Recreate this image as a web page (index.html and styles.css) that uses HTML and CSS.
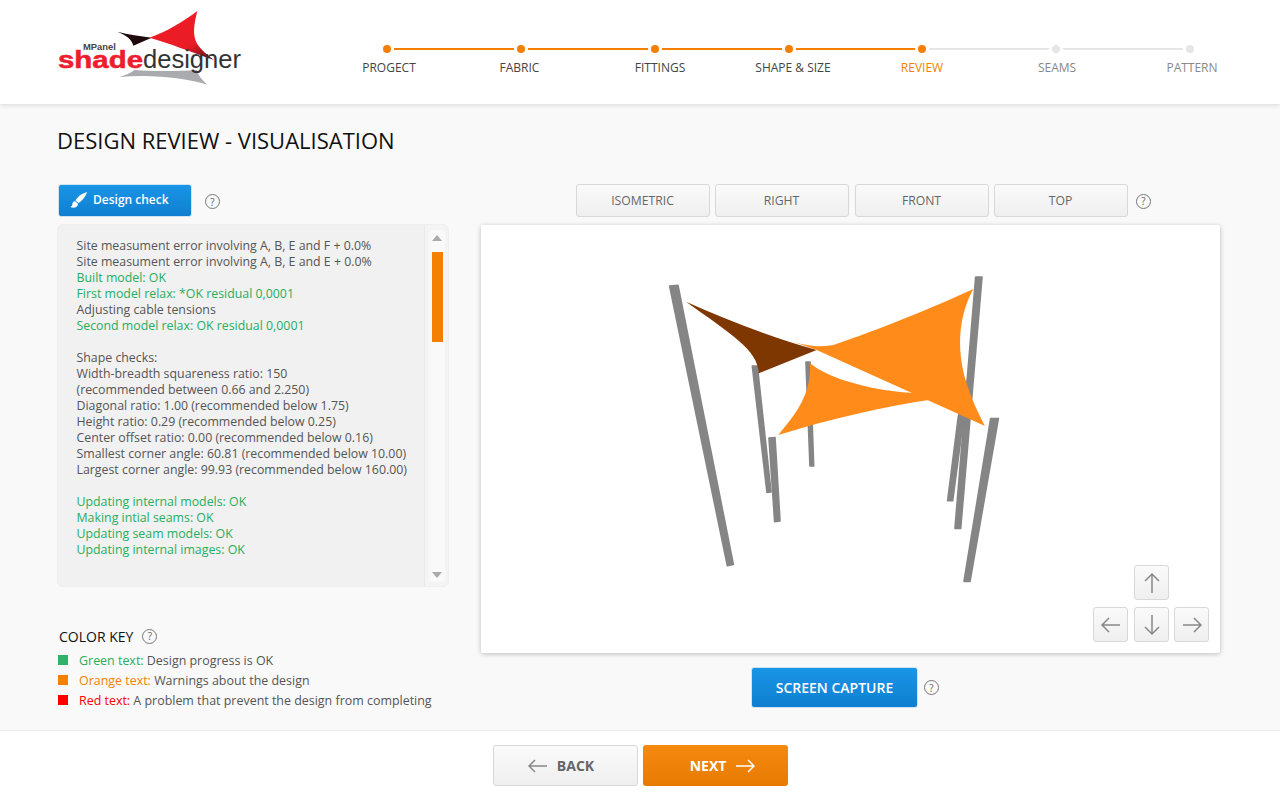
FILE: index.html
```html
<!DOCTYPE html>
<html lang="en">
<head>
<meta charset="utf-8">
<title>Design Review</title>
<link rel="stylesheet" href="styles.css">
</head>
<body>
<div class="page">
  <header class="header">
    <svg class="logo" viewBox="0 0 220 100" width="220" height="100">
      <defs>
        <linearGradient id="redg" x1="0.3" y1="0.2" x2="0.8" y2="1">
          <stop offset="0" stop-color="#ee1c25"/><stop offset="0.65" stop-color="#e81c25"/><stop offset="1" stop-color="#7a1015"/>
        </linearGradient>
      </defs>
      <g transform="scale(0.3333)">
        <path class="logo-dark" d="M232 95 C265 104 300 108 335 113 L280 137 C275 115 255 105 232 95Z"/>
        <path fill="url(#redg)" d="M472 33 C450 120 465 135 522 180 C450 155 390 130 328 113 C380 95 430 65 472 33Z"/>
        <path class="logo-grey" d="M238 231 C265 222 275 218 282 210 C340 214 410 214 470 210 C475 225 485 240 502 254 C440 235 340 222 238 231Z"/>
      </g>
      <text class="logo-mp" x="43" y="50">MPanel</text>
      <text class="logo-shade" x="18" y="68" textLength="85" lengthAdjust="spacingAndGlyphs">shade</text>
      <text class="logo-des" x="103" y="68" textLength="98" lengthAdjust="spacingAndGlyphs">designer</text>
    </svg>
    <nav class="stepper">
      <div class="step step-first"><div class="track"><i class="line line-hidden"></i><b class="dot"></b><i class="line"></i></div><span class="label nudge-r4">PROGECT</span></div>
      <div class="step"><div class="track"><i class="line"></i><b class="dot"></b><i class="line"></i></div><span class="label nudge-l3">FABRIC</span></div>
      <div class="step"><div class="track"><i class="line"></i><b class="dot"></b><i class="line"></i></div><span class="label nudge-r10">FITTINGS</span></div>
      <div class="step"><div class="track"><i class="line"></i><b class="dot"></b><i class="line"></i></div><span class="label nudge-r8">SHAPE &amp; SIZE</span></div>
      <div class="step step-current"><div class="track"><i class="line"></i><b class="dot"></b><i class="line line-off"></i></div><span class="label">REVIEW</span></div>
      <div class="step step-todo"><div class="track"><i class="line line-off"></i><b class="dot"></b><i class="line line-off"></i></div><span class="label nudge-r2">SEAMS</span></div>
      <div class="step step-todo"><div class="track"><i class="line line-off"></i><b class="dot"></b><i class="line line-hidden"></i></div><span class="label nudge-r4">PATTERN</span></div>
    </nav>
  </header>

  <h1 class="title">DESIGN REVIEW - VISUALISATION</h1>

  <main class="main">
    <section class="left">
      <div class="check-row">
        <button class="btn-blue btn-check">
          <svg width="18" height="18" viewBox="0 0 18 18"><path fill="#fff" d="M17 1 C12 2.5 7.5 5.5 5.5 9.5 L8.5 12 C12.5 9.5 16 5 17 1Z"/><path fill="#fff" d="M4.8 10 C2.5 10.5 2.5 12.5 2.2 14 C2 15 1 15.5 0.5 15.8 C2 17.2 6 17.2 7.6 14.5 C8 13.6 8 13 7.8 12.6Z"/></svg>
          Design check
        </button>
        <span class="help">?</span>
      </div>
      <div class="log">
        <div class="log-text">
          <p>Site measument error involving A, B, E and F + 0.0%</p>
          <p>Site measument error involving A, B, E and E + 0.0%</p>
          <p class="ok">Built model: OK</p>
          <p class="ok">First model relax: *OK residual 0,0001</p>
          <p>Adjusting cable tensions</p>
          <p class="ok">Second model relax: OK residual 0,0001</p>
          <p class="gap">Shape checks:</p>
          <p>Width-breadth squareness ratio: 150</p>
          <p>(recommended between 0.66 and 2.250)</p>
          <p>Diagonal ratio: 1.00 (recommended below 1.75)</p>
          <p>Height ratio: 0.29 (recommended below 0.25)</p>
          <p>Center offset ratio: 0.00 (recommended below 0.16)</p>
          <p>Smallest corner angle: 60.81 (recommended below 10.00)</p>
          <p>Largest corner angle: 99.93 (recommended below 160.00)</p>
          <p class="ok gap">Updating internal models: OK</p>
          <p class="ok">Making intial seams: OK</p>
          <p class="ok">Updating seam models: OK</p>
          <p class="ok">Updating internal images: OK</p>
        </div>
        <div class="scroll-col">
          <div class="scroll">
            <span class="tri tri-up"></span>
            <span class="thumb"></span>
            <span class="tri tri-down"></span>
          </div>
        </div>
      </div>
      <div class="key">
        <div class="key-title">COLOR KEY <span class="help">?</span></div>
        <div class="key-row"><span class="sq sq-green"></span><span><em class="t-green">Green text:</em> Design progress is OK</span></div>
        <div class="key-row"><span class="sq sq-orange"></span><span><em class="t-orange">Orange text:</em> Warnings about the design</span></div>
        <div class="key-row"><span class="sq sq-red"></span><span><em class="t-red">Red text:</em> A problem that prevent the design from completing</span></div>
      </div>
    </section>

    <section class="right">
      <div class="views">
        <button class="btn-grey view">ISOMETRIC</button>
        <button class="btn-grey view">RIGHT</button>
        <button class="btn-grey view view-shift">FRONT</button>
        <button class="btn-grey view">TOP</button>
        <span class="help">?</span>
      </div>
      <div class="canvas">
        <svg class="scene" viewBox="0 0 739 428" width="739" height="428">
          <g transform="translate(169 45) scale(0.33333)">
            <g class="pole">
              <path d="M468 276 L480 276 L491 588 L480 588Z"/>
              <path d="M307 288 L322 288 L363 666 L351 667Z"/>
              <path d="M925 440 L960 300 L908 692 L893 692Z"/>
              <path d="M59 48 L84 46 L250 883 L232 887Z"/>
              <path d="M357 504 L375 503 L390 753 L374 755Z"/>
              <path d="M977 21 L996 21 L932 775 L915 775Z"/>
              <path d="M1022 446 L1045 446 L960 934 L942 934Z"/>
            </g>
            <path class="sail-dark" d="M108 95 C230 150 360 200 500 240 L326 310 C325 240 240 190 108 95Z"/>
            <path class="sail" d="M430 215 C470 228 515 232 550 225 C640 195 800 135 970 57 C930 130 915 230 950 340 C965 390 985 430 1005 468 L500 240 Z"/>
            <path class="sail" d="M480 280 C540 330 680 365 805 370 L850 388 C700 410 530 450 385 495 C440 430 485 370 480 280Z"/>
          </g>
        </svg>
        <div class="pad">
          <button class="btn-grey arrow arrow-up"><svg width="18" height="22" viewBox="0 0 18 22"><path d="M9 21 V2 M2 9 L9 2 L16 9"/></svg></button>
          <button class="btn-grey arrow arrow-low"><svg width="20" height="16" viewBox="0 0 20 16"><path d="M19 8 H1 M8 1 L1 8 L8 15"/></svg></button>
          <button class="btn-grey arrow arrow-low"><svg width="18" height="22" viewBox="0 0 18 22"><path d="M9 1 V20 M2 13 L9 20 L16 13"/></svg></button>
          <button class="btn-grey arrow arrow-low"><svg width="20" height="16" viewBox="0 0 20 16"><path d="M1 8 H19 M12 1 L19 8 L12 15"/></svg></button>
        </div>
      </div>
      <div class="capture-row">
        <button class="btn-blue btn-capture">SCREEN CAPTURE</button>
        <span class="help">?</span>
      </div>
    </section>
  </main>

  <footer class="footer">
    <button class="btn-grey nav nav-back"><svg width="20" height="14" viewBox="0 0 20 14"><path d="M19 7 H1 M7 1 L1 7 L7 13"/></svg>BACK</button>
    <button class="nav nav-next">NEXT<svg width="20" height="14" viewBox="0 0 20 14"><path d="M1 7 H19 M13 1 L19 7 L13 13"/></svg></button>
  </footer>
</div>
</body>
</html>
```

FILE: styles.css
```css
* { box-sizing: border-box; }
html, body { margin: 0; padding: 0; }
body { font-family: "Open Sans", "Liberation Sans", sans-serif; background: #f9f9f9; color: #555; }
button { font-family: inherit; cursor: pointer; padding: 0; }
p { margin: 0; }
em { font-style: normal; }

.page { width: 1280px; height: 800px; display: flex; flex-direction: column; overflow: hidden; }

/* header */
.header { height: 104px; flex: none; background: #fff; padding-left: 40px; display: flex; box-shadow: 0 1px 5px rgba(0,0,0,.14); position: relative; }
.logo { display: block; flex: none; }
.logo-dark { fill: #1e0a0c; }
.logo-grey { fill: #a9abae; }
.logo-mp { font: bold 9.4px "Liberation Sans", sans-serif; fill: #444; }
.logo-shade { font: bold 23px "Liberation Sans", sans-serif; fill: #ed1c2e; stroke: #ed1c2e; stroke-width: .5px; }
.logo-des { font: 25px "Liberation Sans", sans-serif; fill: #333; }

.stepper { margin-left: 60px; padding-top: 45px; display: flex; }
.step { width: 134px; display: flex; flex-direction: column; color: #444; }
.track { display: flex; align-items: center; gap: 3px; height: 8px; }
.dot { width: 8px; height: 8px; border-radius: 50%; background: #f57f00; flex: none; }
.line { flex: 1; height: 2px; background: #f57f00; }
.line-off { background: #e6e6e6; }
.line-hidden { visibility: hidden; }
.label { font-size: 12px; line-height: 16px; margin-top: 7px; text-align: center; white-space: nowrap; }
.nudge-r2 { padding-left: 2px; }
.nudge-r4 { padding-left: 4px; }
.nudge-r8 { padding-left: 8px; }
.nudge-r10 { padding-left: 10px; }
.nudge-l3 { padding-right: 3px; }
.step-current { margin-left: -1px; }
.step-current .label { color: #f57f00; }
.step-todo { color: #888; }
.step-todo .dot { background: #e6e6e6; }

.title { margin: 21px 0 0 57px; font-size: 22px; line-height: 30px; font-weight: 400; color: #111; flex: none; }

/* main */
.main { flex: 1; display: flex; padding: 29px 0 0 57px; min-height: 0; }
.left { width: 392px; flex: none; }
.right { width: 739px; flex: none; margin-left: 32px; }

.help { display: inline-flex; align-items: center; justify-content: center; width: 15px; height: 15px; border: 1.3px solid #777; border-radius: 50%; font-size: 10px; line-height: 1; color: #666; background: transparent; flex: none; }

.btn-blue { background: linear-gradient(#1a95e6, #0f7fd0); border: 1px solid #cfe3f2; border-radius: 3px; color: #fff; }
.btn-grey { background: linear-gradient(#fafafa, #efefef); border: 1px solid #d8d8d8; border-radius: 3px; color: #666; }

.check-row { display: flex; align-items: center; gap: 13px; height: 33px; padding-left: 1px; }
.btn-check { width: 134px; height: 33px; display: flex; align-items: center; gap: 5px; padding: 0 0 2px 11px; font-size: 12px; font-weight: 600; }
.check-row .help { margin-top: 2px; }

.log { margin-top: 7px; height: 363px; background: #f1f1f1; border: 1px solid #efefef; border-radius: 6px; display: flex; }
.log-text { width: 367px; padding: 13px 0 0 18.5px; border-right: 1px solid #e9e9e9; font-size: 12.35px; line-height: 16px; color: #555; white-space: nowrap; }
.ok { color: #27ae60; }
.gap { margin-top: 16px; }
.scroll-col { flex: 1; background: #f4f4f4; border-radius: 0 6px 6px 0; padding: 5px 3px 4px 4px; }
.scroll { height: 100%; background: #f9f9f9; border-radius: 4px; display: flex; flex-direction: column; align-items: center; padding-top: 5px; }
.tri { width: 0; height: 0; border-left: 5px solid transparent; border-right: 5px solid transparent; }
.tri-up { border-bottom: 6px solid #aaa; }
.tri-down { border-top: 6px solid #aaa; margin-top: 230px; }
.thumb { width: 11px; height: 90px; background: #f57f00; margin-top: 11px; }

.key { margin-top: 40px; padding-left: 2px; font-size: 12.45px; }
.key-title { display: flex; align-items: center; gap: 9px; height: 18px; font-size: 14px; color: #111; margin-bottom: 5px; }
.key-row { display: flex; align-items: center; height: 20px; gap: 11px; margin-left: -1px; color: #555; white-space: nowrap; }
.sq { width: 10px; height: 10px; flex: none; }
.sq-green { background: #2fb36a; }
.sq-orange { background: #f57f00; }
.sq-red { background: #f00; }
.t-green { color: #27ae60; }
.t-orange { color: #f57f00; }
.t-red { color: #f00; }

.views { display: flex; align-items: center; gap: 5px; padding-left: 95px; height: 33px; }
.view { width: 134px; height: 33px; font-size: 12.2px; padding-right: 1px; }
.view-shift { margin-left: 1px; }
.views .help { margin-left: 3px; margin-top: 1px; }

.canvas { margin-top: 8px; width: 739px; height: 428px; background: #fff; box-shadow: 0 1px 5px rgba(0,0,0,.25); border-radius: 2px; position: relative; }
.scene { display: block; }
.pole path { fill: #858585; stroke: #858585; stroke-width: 5; stroke-linejoin: round; }
.sail { fill: #ff8c1a; }
.sail-dark { fill: #7f3700; }
.pad { position: absolute; right: 11px; bottom: 11px; display: grid; grid-template-columns: 41px 40px 35px; grid-template-rows: 42px 35px; }
.arrow { width: 35px; height: 35px; display: flex; align-items: center; justify-content: center; }
.arrow svg path { fill: none; stroke: #888; stroke-width: 1.5; }
.arrow-up { grid-column: 2; grid-row: 1; }
.arrow-low { grid-row: 2; }

.capture-row { display: flex; align-items: center; gap: 6px; margin-top: 14px; padding-left: 270px; }
.btn-capture { width: 167px; height: 41px; font-size: 14px; font-weight: 600; }

/* footer */
.footer { height: 70px; flex: none; background: #fff; border-top: 1px solid #e9e9e9; display: flex; justify-content: center; gap: 5px; padding-top: 14px; }
.nav { width: 145px; height: 41px; display: flex; align-items: center; justify-content: center; gap: 9px; font-size: 14px; font-weight: 700; border-radius: 3px; }
.nav svg path { fill: none; stroke: #888; stroke-width: 1.5; }
.nav-back { padding-right: 8px; }
.nav-next { background: linear-gradient(#f58a10, #e87a00); border: 0; color: #fff; padding-left: 15px; }
.nav-next svg path { stroke: #fff; }
```
